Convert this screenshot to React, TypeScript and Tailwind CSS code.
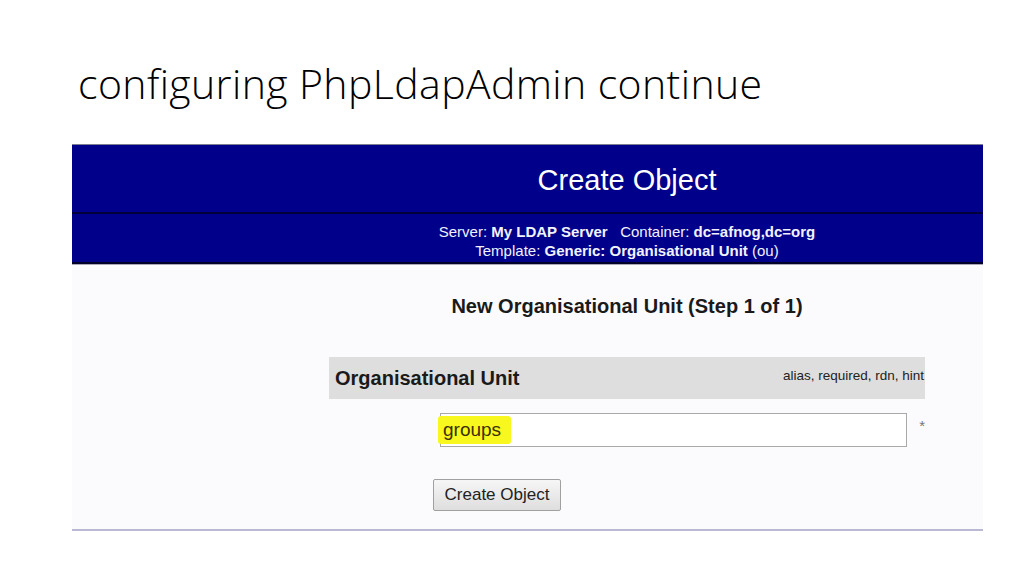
export default function App() {
  return (
    <div className="w-[1024px] h-[576px] bg-white overflow-hidden">
      <h1 className="pl-[78px] pt-[59px] text-[41px] leading-[48px] tracking-[0.4px] font-light text-black font-['Open_Sans',sans-serif]">
        configuring PhpLdapAdmin continue
      </h1>

      {/* screenshot of phpLDAPadmin */}
      <div className="ml-[72px] mt-[37px] w-[911px] font-['Liberation_Sans',Arial,sans-serif]">
        <div className="border-t border-[#7c7c92] bg-[#00008a]">
          <div className="h-[69px] pl-[199px] flex items-center justify-center border-b-2 border-[#00003c] pt-[4px]">
            <span className="text-[29px] text-white">Create Object</span>
          </div>
          <div className="h-[50px] pl-[199px] pt-[6px] flex flex-col items-center justify-center text-[15px] leading-[19px] text-[#f2f2ff] border-b-2 border-[#00002a]">
            <div>
              Server: <b>My LDAP Server</b>&nbsp;&nbsp; Container: <b>dc=afnog,dc=org</b>
            </div>
            <div>
              Template: <b>Generic: Organisational Unit</b> (ou)
            </div>
          </div>
        </div>

        <div className="bg-[#fbfbfd] border-t border-[#a8a8b8] border-b-2 border-b-[#b9b9d3] pl-[199px] pt-[29px] pb-[18px] flex flex-col items-center">
          <div className="text-[20px] leading-[24px] font-bold text-[#1a1a1a]">
            New Organisational Unit (Step 1 of 1)
          </div>

          <div className="mt-[39px] w-[596px] h-[42px] bg-[#dedede] flex items-center justify-between pl-[6px] pr-[1px]">
            <span className="text-[20px] font-bold text-[#1a1a1a]">Organisational Unit</span>
            <span className="text-[13.5px] text-[#222] -mt-[3px]">alias, required, rdn, hint</span>
          </div>

          <div className="mt-[14px] w-[596px] flex pl-[111px]">
            <div className="w-[468px] h-[34px] bg-white border border-[#a9a9a9] flex items-center">
              <span className="-ml-[3px] pl-[5px] pr-[10px] py-[1px] bg-[#f8f81e] text-[19px] leading-[26px] text-[#3a3000] rounded-[3px]">
                groups
              </span>
            </div>
            <span className="ml-[12px] mt-[2px] text-[15px] text-[#777]">*</span>
          </div>

          <div className="mt-[32px] w-[596px] pl-[104px]">
            <button className="w-[128px] h-[32px] border border-[#a0a0a0] rounded-[2px] bg-gradient-to-b from-[#f6f6f6] to-[#dedede] text-[17px] text-[#222]">
              Create Object
            </button>
          </div>
        </div>
      </div>
    </div>
  )
}
